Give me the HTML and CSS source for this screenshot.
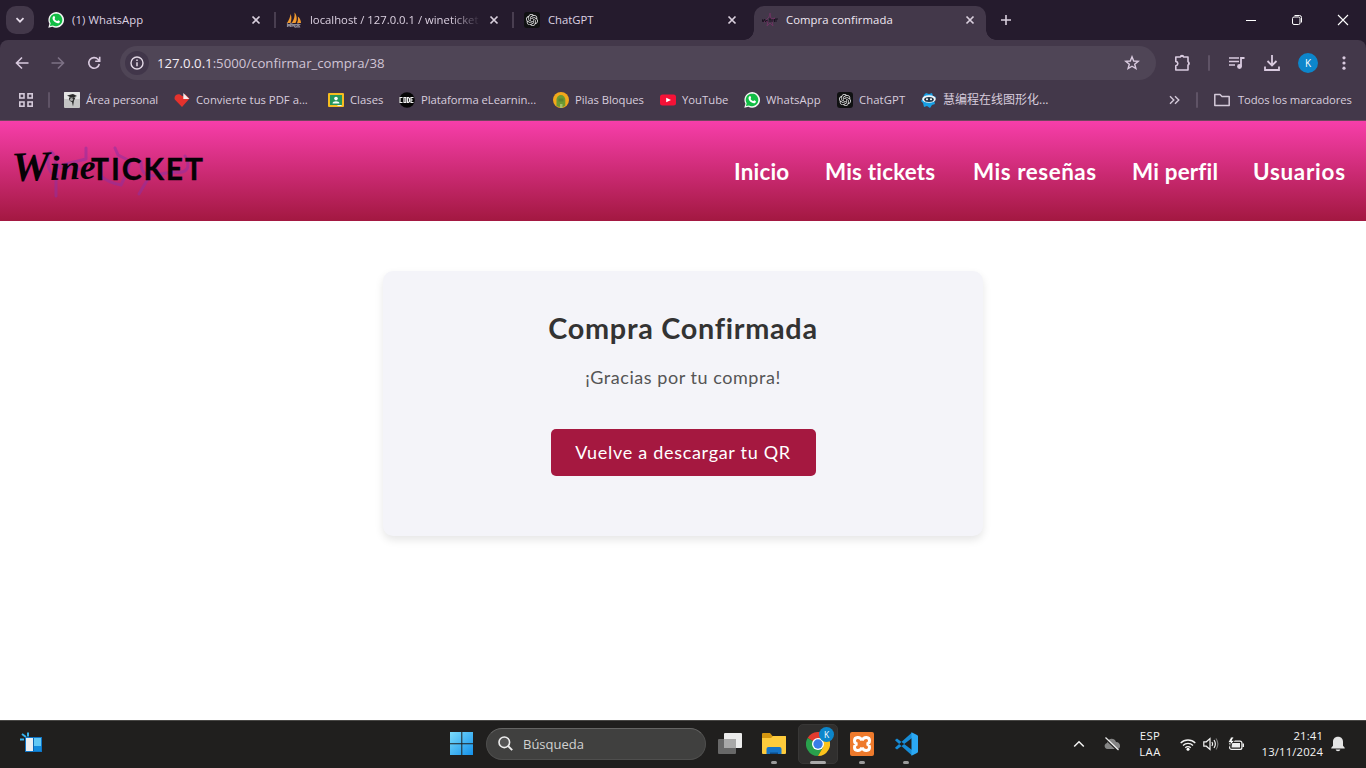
FILE: index.html
```html
<!DOCTYPE html>
<html lang="es">
<head>
<meta charset="utf-8">
<title>Compra confirmada</title>
<link rel="stylesheet" href="styles.css">
</head>
<body>
<svg class="defs" width="0" height="0" aria-hidden="true">
  <symbol id="whatsapp" viewBox="0 0 16 16">
    <path d="M.3 15.7l1.1-4A7.8 7.8 0 1 1 4.4 14.7z" fill="#f4f6f4"/>
    <path d="M1.900 14.100l.8-2.800a6.300 6.300 0 1 1 2.200 2.100z" fill="#12bd45"/>
    <path d="M5.500 4.200c.5-.3.9-.2 1.100.3l.5 1.200c.1.4-.6.9-.5 1.200.5 1 1.400 1.800 2.500 2.200.4.1.8-.9 1.200-.8l1.300.7c.5.2.3 1.200-.2 1.700-.9.8-2.200.6-3.700-.1C6 9.700 4.600 7.900 4.500 6.300c0-.9.4-1.700 1-2.100z" fill="#fff"/>
  </symbol>
  <symbol id="chatgpt" viewBox="0 0 16 16">
    <rect width="16" height="16" rx="3" fill="#101112"/>
    <path transform="translate(2 2) scale(.5)" fill="#e6e6e6" d="M22.2819 9.8211a5.9847 5.9847 0 0 0-.5157-4.9108 6.0462 6.0462 0 0 0-6.5098-2.9A6.0651 6.0651 0 0 0 4.9807 4.1818a5.9847 5.9847 0 0 0-3.9977 2.9 6.0462 6.0462 0 0 0 .7427 7.0966 5.98 5.98 0 0 0 .511 4.9107 6.051 6.051 0 0 0 6.5146 2.9001A5.9847 5.9847 0 0 0 13.2599 24a6.0557 6.0557 0 0 0 5.7718-4.2058 5.9894 5.9894 0 0 0 3.9977-2.9001 6.0557 6.0557 0 0 0-.7475-7.0729zm-9.022 12.6081a4.4755 4.4755 0 0 1-2.8764-1.0408l.1419-.0804 4.7783-2.7582a.7948.7948 0 0 0 .3927-.6813v-6.7369l2.02 1.1686a.071.071 0 0 1 .038.052v5.5826a4.504 4.504 0 0 1-4.4945 4.4944zm-9.6607-4.1254a4.4708 4.4708 0 0 1-.5346-3.0137l.142.0852 4.783 2.7582a.7712.7712 0 0 0 .7806 0l5.8428-3.3685v2.3324a.0804.0804 0 0 1-.0332.0615L9.74 19.9502a4.4992 4.4992 0 0 1-6.1408-1.6464zM2.3408 7.8956a4.485 4.485 0 0 1 2.3655-1.9728V11.6a.7664.7664 0 0 0 .3879.6765l5.8144 3.3543-2.0201 1.1685a.0757.0757 0 0 1-.071 0l-4.8303-2.7865A4.504 4.504 0 0 1 2.3408 7.872zm16.5963 3.8558L13.1038 8.364 15.1192 7.2a.0757.0757 0 0 1 .071 0l4.8303 2.7913a4.4944 4.4944 0 0 1-.6765 8.1042v-5.6772a.79.79 0 0 0-.407-.667zm2.0107-3.0231l-.142-.0852-4.7735-2.7818a.7759.7759 0 0 0-.7854 0L9.409 9.2297V6.8974a.0662.0662 0 0 1 .0284-.0615l4.8303-2.7866a4.4992 4.4992 0 0 1 6.6802 4.66zM8.3065 12.863l-2.02-1.1638a.0804.0804 0 0 1-.038-.0567V6.0742a4.4992 4.4992 0 0 1 7.3757-3.4537l-.142.0805L8.704 5.459a.7948.7948 0 0 0-.3927.6813zm1.0976-2.3654l2.602-1.4998 2.6069 1.4998v2.9994l-2.5974 1.4997-2.6067-1.4997Z"/>
  </symbol>
  <symbol id="close" viewBox="0 0 10 10">
    <path d="M1.500 1.500l7 7M8.500 1.500l-7 7" stroke="#d9cfdd" stroke-width="1.700" fill="none"/>
  </symbol>
</svg>

<div class="tabstrip">
  <button class="tab-search"><svg width="10" height="10" viewBox="0 0 10 10"><path d="M1.500 3.200L5 6.700l3.500-3.500" fill="none" stroke="#e6dcea" stroke-width="1.700"/></svg></button>
  <div class="tab">
    <svg class="ico"><use href="#whatsapp"/></svg><span class="tab-title tt-wa">(1) WhatsApp</span><svg class="close"><use href="#close"/></svg>
  </div>
  <div class="tab sep">
    <svg class="ico" viewBox="0 0 16 16"><path d="M1 11C3 8 4.300 5 4.500 2 6 5 5.500 8 4.500 11zM5.700 11C8 8 9 4 8.500.5 11 3 11.500 8 9.500 11zM11 11c1-2 1.200-4 .8-6.500C14 6 15 8.500 15 11z" fill="#f29a2e"/><path d="M1 12.500h13.500M1.500 15v-3l1.500 2 1.500-2v3M6 15v-3l3 3v-3M10.500 15l1.500-3 1.500 3z" fill="none" stroke="#8b8793" stroke-width="1.200"/></svg><span class="tab-title fade">localhost / 127.0.0.1 / wineticket</span><svg class="close"><use href="#close"/></svg>
  </div>
  <div class="tab sep">
    <svg class="ico"><use href="#chatgpt"/></svg><span class="tab-title">ChatGPT</span><svg class="close"><use href="#close"/></svg>
  </div>
  <div class="tab active">
    <svg class="ico" viewBox="0 0 16 16"><path d="M2 10l5-5 1-4 1 6 4-1-3 3 1 5-3-3-3 3 1-5z" fill="none" stroke="#6b3360"/><path d="M0 7l1 3 1.500-3 1 3 1-2 1.500 1.500M7 7h2M8 7v3M10 7v3M11 8.500L12.500 7v3M14 7v3M13 7h3" fill="none" stroke="#1b1120"/></svg><span class="tab-title tt-cc">Compra confirmada</span><svg class="close"><use href="#close"/></svg>
  </div>
  <svg class="new-tab" width="12" height="12" viewBox="0 0 12 12"><path d="M6 1v10M1 6h10" stroke="#d9cfdd" stroke-width="1.600"/></svg>
  <div class="win-controls">
    <svg width="12" height="12" viewBox="0 0 12 12"><path d="M1 6.500h10" stroke="#fff"/></svg>
    <svg width="12" height="12" viewBox="0 0 12 12"><g fill="none" stroke="#fff"><rect x="1.500" y="3" width="7.500" height="7.500" rx="1.500"/><path d="M3.500 1.500H8.500a2 2 0 0 1 2 2V8.500"/></g></svg>
    <svg width="12" height="12" viewBox="0 0 12 12"><path d="M1 1l10 10M11 1L1 11" stroke="#fff" stroke-width="1.100"/></svg>
  </div>
</div>

<div class="toolbar">
  <div class="nav-icons">
    <svg width="14" height="14" viewBox="0 0 14 14"><path d="M13.500 7H2M7 1.500L1.500 7 7 12.500" fill="none" stroke="#d9cadf" stroke-width="1.600"/></svg>
    <svg width="14" height="14" viewBox="0 0 14 14"><path d="M.5 7H12M7 1.500L12.500 7 7 12.500" fill="none" stroke="#7d7185" stroke-width="1.600"/></svg>
    <svg width="14" height="14" viewBox="0 0 14 14"><path d="M12.300 8A5.300 5.300 0 1 1 11 3.300L12.500 5M12.700.8V5.300H8.200" fill="none" stroke="#d9cadf" stroke-width="1.600"/></svg>
  </div>
  <div class="omnibox">
    <span class="site-info"><svg width="14" height="14" viewBox="0 0 14 14"><circle cx="7" cy="7" r="6" fill="none" stroke="#e3d9e6" stroke-width="1.400"/><path d="M7 6.200v4M7 3.600v1.500" stroke="#e3d9e6" stroke-width="1.500"/></svg></span>
    <span class="url"><b>127.0.0.1</b>:5000/confirmar_compra/38</span>
    <svg class="star" width="16" height="16" viewBox="0 0 16 16"><path d="M8 1.800l1.700 4.200 4.500.3-3.500 2.900 1.200 4.400L8 11.200l-3.900 2.400 1.200-4.400L1.800 6.300l4.500-.3z" fill="none" stroke="#d9cadf" stroke-width="1.400"/></svg>
  </div>
  <div class="actions">
    <svg width="18" height="18" viewBox="0 0 18 18"><path d="M2.800 3h4.700a1.500 1.500 0 0 1 3 0H15v4.800a1.700 1.700 0 0 1 0 3.200v5H2.800v-4.200c2.700-.5 2.700-3.900 0-4.400z" fill="none" stroke="#d9cadf" stroke-width="1.600" stroke-linejoin="round"/><path d="M7.500 3a1.500 1.500 0 0 1 3 0zM15 7.800a1.700 1.700 0 0 1 0 3.200z" fill="#d9cadf"/></svg>
    <i class="divider"></i>
    <svg class="media" width="18" height="16" viewBox="0 0 18 16"><path d="M1 3h10M1 6.500h10M1 10h6" stroke="#d9cadf" stroke-width="1.600"/><path d="M13 11.500V3h3.500" fill="none" stroke="#d9cadf" stroke-width="1.800"/><circle cx="11.500" cy="11.500" r="2.400" fill="#d9cadf"/></svg>
    <svg width="18" height="18" viewBox="0 0 18 18"><path d="M9 1v10M4.500 7L9 11.500 13.500 7M2 12.500V16h14v-3.500" fill="none" stroke="#d9cadf" stroke-width="1.800"/></svg>
    <span class="avatar">K</span>
    <svg class="kebab" width="4" height="14" viewBox="0 0 4 14"><g fill="#d9cadf"><circle cx="2" cy="1.800" r="1.600"/><circle cx="2" cy="7" r="1.600"/><circle cx="2" cy="12.200" r="1.600"/></g></svg>
  </div>
</div>

<div class="bookmarks">
  <svg class="apps" width="14" height="14" viewBox="0 0 14 14"><g fill="none" stroke="#d4c9d9" stroke-width="1.600"><rect x=".8" y=".8" width="4.200" height="4.200"/><rect x="9" y=".8" width="4.200" height="4.200"/><rect x=".8" y="9" width="4.200" height="4.200"/><rect x="9" y="9" width="4.200" height="4.200"/></g></svg>
  <i class="divider"></i>
  <div class="bm-list">
    <div class="bm"><svg class="ico" viewBox="0 0 16 16"><rect width="16" height="16" rx="1" fill="#c4c4c4"/><rect width="16" height="7" rx="1" fill="#e5e5e5"/><path d="M3 3.500L9 2l4 2-5 2zM5 5.500c-.3 3 1.500 4 3 4.500l1 4.500 1-6 1.500-3z" fill="#292929"/><circle cx="7.500" cy="7.500" r="1.600" fill="#aaa"/></svg><span class="b1">Área personal</span></div>
    <div class="bm"><svg class="ico" viewBox="0 0 16 16"><path d="M8 15L.8 7.500C-.8 3 5 .3 8 4l3 .5V2l4.500 4.500z" fill="#e5322d"/><path d="M9.300 1l6 6h-6z" fill="#f4eeee"/></svg><span>Convierte tus PDF a...</span></div>
    <div class="bm"><svg class="ico" viewBox="0 0 16 16"><rect y="1" width="16" height="14" rx="1" fill="#f5bd1f"/><rect x="2" y="3" width="12" height="10" fill="#25965b"/><circle cx="8" cy="6.600" r="1.800" fill="#fff"/><path d="M4.500 11.500c0-3 7-3 7 0z" fill="#f4fff8"/><path d="M9.500 13h4v1h-4z" fill="#eee"/></svg><span>Clases</span></div>
    <div class="bm"><svg class="ico" viewBox="0 0 16 16"><circle cx="8" cy="8" r="7.800" fill="#050505"/><path d="M3.500 5.500H1v5h2.500M5 5.500h1.800v5H5zM8.500 5.500h1l1 1v3l-1 1h-1zM14.500 5.500H12v5h2.500M12 8h1.800" fill="none" stroke="#eee" stroke-width="1.200"/></svg><span class="b4">Plataforma eLearnin...</span></div>
    <div class="bm"><svg class="ico" viewBox="0 0 16 16"><circle cx="8" cy="8" r="8" fill="#f2a81b"/><path d="M3.500 14V7.500a4.300 4.300 0 0 1 8.800 0V13.500c-2 2-6 2-8.800.5z" fill="#6b9a32"/><path d="M5.500 6.500h5v3h-5z" fill="#5a8430"/><path d="M7 12h2.500v4H7z" fill="#a5bd69"/></svg><span class="b4">Pilas Bloques</span></div>
    <div class="bm"><svg class="ico" viewBox="0 0 16 16"><rect y="2.500" width="16" height="11" rx="2.500" fill="#f51237"/><path d="M6.200 5.700L11 8l-4.800 2.300z" fill="#fff"/></svg><span>YouTube</span></div>
    <div class="bm"><svg class="ico"><use href="#whatsapp"/></svg><span class="b7">WhatsApp</span></div>
    <div class="bm"><svg class="ico"><use href="#chatgpt"/></svg><span class="b7">ChatGPT</span></div>
    <div class="bm"><svg class="ico" viewBox="0 0 16 16"><path d="M5 1l3 1 3-1 1 3 3 1-2 3 1 4-3 1-2 3-3-2-3 1-1-4-2-2 2-3 1-3z" fill="#189fe4"/><ellipse cx="8" cy="7" rx="6.800" ry="3.800" fill="#f1f5f8"/><ellipse cx="8" cy="7.400" rx="4.800" ry="2.500" fill="#223445"/><circle cx="6" cy="7.200" r="1" fill="#fff"/><circle cx="10" cy="7.200" r="1" fill="#fff"/></svg><span class="b9">慧编程在线图形化...</span></div>
  </div>
  <div class="bm-right">
    <svg width="11" height="10" viewBox="0 0 11 10"><path d="M1 1.200L4.800 5 1 8.800M6 1.200L9.800 5 6 8.800" fill="none" stroke="#d4c9d9" stroke-width="1.400"/></svg>
    <i class="divider"></i>
    <svg width="16" height="14" viewBox="0 0 16 14"><path d="M.8 11.500v-10H6l2 2h7.200v9H.8z" fill="none" stroke="#d4c9d9" stroke-width="1.500" stroke-linejoin="round"/></svg>
    <span class="b10">Todos los marcadores</span>
  </div>
</div>

<header class="site-header">
  <svg class="logo" width="210" height="70" viewBox="0 0 210 70">
    <g fill="none" stroke="#8f2fa0" stroke-width="3" opacity=".55" stroke-linecap="round" stroke-linejoin="round">
      <path d="M56 60V32c-1-20-8-20-8-8 0 9 3 16 10 16M58 30l28-7V12M60 32c12-4 18 6 26-2M115 12l3 7 12 6-4 14-5 10c-10-2-16-5-20-9M139 58l10-17c-8-6-8-9-8-15M150 40l22-4c14 2 20-3 13-16"/>
    </g>
    <text class="logo-wine" x="12" y="44" textLength="84" lengthAdjust="spacingAndGlyphs" transform="rotate(-2 50 44)"><tspan class="logo-cap">W</tspan>ine</text>
    <text class="logo-ticket" x="91" y="44" textLength="112" lengthAdjust="spacing">TICKET</text>
  </svg>
  <nav class="menu">
    <a class="m1">Inicio</a><a class="m2">Mis tickets</a><a class="m3">Mis reseñas</a><a class="m4">Mi perfil</a><a class="m5">Usuarios</a>
  </nav>
</header>

<main class="page">
  <section class="card">
    <h1>Compra Confirmada</h1>
    <p>¡Gracias por tu compra!</p>
    <a class="btn">Vuelve a descargar tu QR</a>
  </section>
</main>

<footer class="taskbar">
  <svg class="widgets" width="24" height="22" viewBox="0 0 24 22"><path d="M2 2l4 3M8 .5v4M0 7.500h4" stroke="#37b3ee" stroke-width="2"/><rect x="5.500" y="5.500" width="16" height="14" fill="#0d65b0" stroke="#0f75c6"/><rect x="6" y="6" width="7" height="13" fill="#eceff2"/><rect x="14" y="6" width="7" height="8" fill="#61c8f5"/><rect x="14" y="14" width="7" height="5" fill="#128bdd"/></svg>
  <div class="task-center">
    <svg class="start" width="24" height="24" viewBox="0 0 24 24"><defs><linearGradient id="win" gradientUnits="userSpaceOnUse" x1="0" y1="0" x2="24" y2="24"><stop offset="0" stop-color="#7bdcfb"/><stop offset="1" stop-color="#0f8de9"/></linearGradient></defs><path d="M0 0h11.300v11.300H0zM12.300 0H23v11.300H12.300zM0 12.300h11.300V23H0zM12.300 12.300H23V23H12.300z" fill="url(#win)"/></svg>
    <div class="search"><svg width="16" height="16" viewBox="0 0 16 16"><circle cx="6.300" cy="6.300" r="5.300" fill="#555" stroke="#eee" stroke-width="1.600"/><path d="M10.200 10.200l4 4" stroke="#eee" stroke-width="1.900"/></svg><span>Búsqueda</span></div>
    <div class="task"><svg width="24" height="24" viewBox="0 0 24 24"><rect x="6" y="1" width="18" height="15" rx="1" fill="#ececec"/><rect x="0" y="7" width="18" height="15" rx="1" fill="#707070" opacity=".9"/><path d="M6 7h12v9H6z" fill="#a8a8a8"/></svg></div>
    <div class="task run"><svg width="24" height="24" viewBox="0 0 24 24"><path d="M0 2q0-1 1-1h7l2.500 3H24v6H0z" fill="#d49610"/><path d="M0 6h9l2-2h12q1 0 1 1v16q0 1-1 1H1q-1 0-1-1z" fill="#fdcb3c"/><path d="M4.500 22v-5q0-2 2-2h11q2 0 2 2v5z" fill="#1674c7"/><path d="M8 22v-1.500h8V22z" fill="#0d4c88"/></svg></div>
    <div class="task run current"><svg width="24" height="24" viewBox="0 0 24 24"><path d="M12 12L1.600 6A12 12 0 0 1 22.400 6z" fill="#e33b2e"/><path d="M12 12L1.600 6A12 12 0 0 0 12 24l5.200-9z" fill="#29a04c"/><path d="M22.400 6A12 12 0 0 1 12 24l5.200-9L12 6z" fill="#fbc31c"/><circle cx="12" cy="12" r="6" fill="#fff"/><circle cx="12" cy="12" r="4.700" fill="#397de7"/></svg><span class="badge">K</span></div>
    <div class="task run"><svg width="24" height="24" viewBox="0 0 24 24"><rect width="24" height="24" rx="2" fill="#ee7a2c"/><g fill="none" stroke="#fff" stroke-width="3"><path d="M12 8.500C10 4 4.500 5 4.500 8.500c0 2 1 3.300 3 3.500-2 .2-3 1.500-3 3.500 0 3.500 5.500 4.500 7.500 0M12 8.500C14 4 19.500 5 19.500 8.500c0 2-1 3.300-3 3.500 2 .2 3 1.500 3 3.500 0 3.500-5.500 4.500-7.500 0"/><path d="M8 12h8" stroke="#ee7a2c" stroke-width="1"/></g></svg></div>
    <div class="task run"><svg width="24" height="24" viewBox="0 0 24 24"><path d="M1 8l2-1.500L18 18v5.500L1.500 8.800zM1 16l2 1.500L18 6V.5L1.500 15.200z" fill="#168bd5"/><path d="M17.500.3L23 3c1 .5 1 1 1 2v14c0 1 0 1.500-1 2l-5.500 2.700z" fill="#2ba8f3"/></svg></div>
  </div>
  <div class="tray">
    <svg class="chev" width="12" height="8" viewBox="0 0 12 8"><path d="M1.200 6.500L6 1.800l4.800 4.700" fill="none" stroke="#f2f2f2" stroke-width="1.500"/></svg>
    <svg class="cloud" width="18" height="14" viewBox="0 0 18 14"><path d="M4.500 12C1 12 .5 7 4 6c.5-5 7.500-6 9-1 5 0 5.500 7 1 7z" fill="#858585"/><path d="M1.700 1.300l13 12.500" stroke="#201f1e" stroke-width="1.500"/><path d="M2.500.5l13 12.500" stroke="#eee" stroke-width="1.200"/></svg>
    <div class="lang"><span>ESP</span><span>LAA</span></div>
    <svg class="wifi" width="16" height="13" viewBox="0 0 16 13"><g fill="none" stroke="#f3f3f3" stroke-width="1.300"><path d="M.7 5a10.400 10.400 0 0 1 14.600 0M3 7.500a7.100 7.100 0 0 1 10 0M5.300 9.800a3.800 3.800 0 0 1 5.400 0"/></g><circle cx="8" cy="11.300" r="1.500" fill="#fff"/></svg>
    <svg class="vol" width="16" height="14" viewBox="0 0 16 14"><g fill="none" stroke="#f3f3f3" stroke-width="1.200"><path d="M.8 4.800h2.500L7 1.500v11L3.300 9.200H.8z"/><path d="M9 5q1.300 2 0 4M11 3q2.700 4 0 8"/><path d="M13 1.500q3.700 5.500 0 11" stroke="#777"/></g></svg>
    <svg class="batt" width="16" height="15" viewBox="0 0 16 15"><rect x="1.600" y="4.100" width="12.300" height="8.300" rx="2" fill="none" stroke="#f3f3f3" stroke-width="1.200"/><path d="M4 6h8v4.500H3.500zM14.500 6.500H16v3.500h-1.500z" fill="#eee"/><path d="M3 0L0 5.500h2.500L1 9.500l5.500-6H4L6 0z" fill="#fff" stroke="#201f1e" stroke-width=".8"/></svg>
    <div class="clock"><span>21:41</span><span>13/11/2024</span></div>
    <svg class="bell" width="14" height="16" viewBox="0 0 14 16"><path d="M7 .7c3.300 0 5 2.200 5 5v4l1.700 2v.8H.3v-.8L2 9.700v-4c0-2.800 1.700-5 5-5zM4.700 13.500h4.600c-.3 2.200-4.300 2.200-4.600 0z" fill="#e4e4e4"/></svg>
  </div>
</footer>
</body>
</html>
```
FILE: styles.css
```css
* { box-sizing: border-box; }
body {
  margin: 0;
  width: 1366px;
  height: 768px;
  overflow: hidden;
  display: flex;
  flex-direction: column;
  background: #fff;
  font-family: "Open Sans", "Noto Sans CJK SC", sans-serif;
  font-size: 11.3px;
}
svg { display: block; flex: none; }
.defs { position: absolute; }
.ico { width: 16px; height: 16px; }
.divider { width: 2px; height: 16px; border-radius: 1px; background: #5f5366; flex: none; }

/* Tab strip */
.tabstrip { height: 40px; flex: none; display: flex; align-items: center; background: #251b2d; color: #ddd2e2; }
.tab-search { width: 28px; height: 28px; margin: 0 4px 0 6px; padding: 0; border: 0; border-radius: 10px; background: #43384a; display: grid; place-items: center; }
.tab { width: 238px; height: 40px; padding: 0 15px 0 10px; display: flex; align-items: center; gap: 8px; position: relative; }
.tab-title { flex: 1; padding-bottom: 2px; white-space: nowrap; overflow: hidden; }
.tt-wa { letter-spacing: .1px; }
.tt-cc { letter-spacing: .08px; }
.tab .close { width: 10px; height: 10px; }
.sep::before { content: ""; position: absolute; left: -2px; top: 12px; width: 2px; height: 16px; background: #493e50; }
.fade { -webkit-mask-image: linear-gradient(90deg, #000 82%, transparent 100%); mask-image: linear-gradient(90deg, #000 82%, transparent 100%); }
.active { color: #f0e8f3; }
.active > * { position: relative; }
.active::before { content: ""; position: absolute; left: 2px; right: 4px; top: 6px; bottom: 0; border-radius: 10px 10px 0 0; background: #43384a; }
.active::after { content: ""; position: absolute; left: -8px; right: -6px; bottom: 0; height: 10px;
  background: radial-gradient(circle at 0 0, transparent 9.5px, #43384a 10px) 0 0 / 10px 10px no-repeat, radial-gradient(circle at 100% 0, transparent 9.5px, #43384a 10px) 100% 0 / 10px 10px no-repeat; }
.new-tab { margin-left: 10px; }
.win-controls { margin-left: auto; padding-right: 17px; display: flex; gap: 34px; }

/* Toolbar */
.toolbar { height: 46px; flex: none; display: flex; align-items: center; background: #43384a; border-radius: 8px 8px 0 0; box-shadow: 0 -8px 0 0 #251b2d; clip-path: inset(0); }
.nav-icons { width: 120px; padding-left: 15px; display: flex; gap: 22px; }
.omnibox { width: 1036px; height: 34px; border-radius: 17px; background: #4f4556; display: flex; align-items: center; padding: 0 16px 0 5px; }
.site-info { width: 24px; height: 24px; border-radius: 50%; background: #41364a; display: grid; place-items: center; margin-right: 8px; }
.url { flex: 1; font-size: 13.2px; color: #d0c4d5; white-space: nowrap; }
.url b { font-weight: 400; color: #f3edf5; }
.actions { padding-left: 17px; display: flex; align-items: center; }
.actions .divider { margin: 0 18px 0 17px; }
.actions .media { margin-right: 17px; }
.avatar { width: 20px; height: 20px; margin: 0 24px 0 17px; border-radius: 50%; background: #0c86cb; color: #fff; font-size: 10px; display: grid; place-items: center; }

/* Bookmarks bar */
.bookmarks { height: 35px; flex: none; padding: 0 14px 7px 19px; display: flex; align-items: center; background: #43384a; border-bottom: 1px solid #71455f; color: #d8cddd; }
.bookmarks .apps { margin-right: 15px; }
.bm-list { margin-left: 14px; display: grid; grid-template-columns: 110px 154px 71px 154px 107px 84px 93px 84px 130px; }
.bm { display: flex; align-items: center; gap: 6px; white-space: nowrap; }
.b1 { letter-spacing: -.1px; }
.b4 { letter-spacing: -.05px; }
.b7 { letter-spacing: .1px; }
.b9 { font-size: 12px; line-height: 16px; }
.bm-right { margin-left: auto; display: flex; align-items: center; white-space: nowrap; }
.bm-right .divider { margin: 0 16px; }
.b10 { margin-left: 8px; width: 114px; letter-spacing: -.12px; }

/* Site header */
.site-header { height: 100px; flex: none; display: flex; align-items: center; justify-content: space-between; padding-right: 20px; background: linear-gradient(#f73eaa, #a31841); }
.logo-wine { font: italic 700 35px "Liberation Serif", serif; fill: #050205; }
.logo-cap { font-size: 42px; }
.logo-ticket { font: 700 30px Lato, sans-serif; fill: #050205; stroke: #050205; stroke-width: .3px; }
.menu { display: grid; grid-template-columns: 91px 148px 159px 121px 93px; color: #fff; font: 700 22.4px Lato, sans-serif; white-space: nowrap; }
.m1 { letter-spacing: .2px; }
.m2 { letter-spacing: .2px; }
.m3 { letter-spacing: .55px; }
.m4 { letter-spacing: .2px; }
.m5 { letter-spacing: .75px; }

/* Confirmation card */
.page { flex: 1; padding-top: 50px; font-family: Lato, sans-serif; }
.card { width: 600px; height: 265px; margin: 0 auto; padding: 39px 20px; border-radius: 10px; background: #f4f4f9; box-shadow: 0 4px 8px rgba(0, 0, 0, .1); display: flex; flex-direction: column; align-items: center; }
.card h1 { margin: 0; font-size: 28.8px; line-height: 36px; letter-spacing: .72px; color: #333; }
.card p { margin: 19px 0 0; font-size: 18px; line-height: 24px; letter-spacing: .55px; color: #555; }
.btn { width: 265px; height: 47px; margin-top: 40px; border-radius: 5px; background: #a51840; color: #fff; font-size: 18px; line-height: 47px; letter-spacing: .7px; text-align: center; }

/* Taskbar */
.taskbar { height: 48px; flex: none; display: flex; align-items: center; background: #201f1e; border-top: 1px solid #484745; color: #f4f4f4; }
.widgets { margin: 0 0 4px 20px; }
.task-center { margin: 0 0 2px 406px; display: flex; align-items: center; }
.search { width: 220px; height: 32px; margin: 0 4px 0 12px; padding-left: 11px; border-radius: 16px; background: #40403f; border: 1px solid #4e4e4d; border-top-color: #656564; display: flex; align-items: center; gap: 9px; font-size: 13px; color: #d2d2d1; }
.task { width: 40px; height: 40px; margin-right: 4px; border-radius: 5px; display: grid; place-items: center; position: relative; }
.current { background: #302f2e; border: 1px solid #383736; }
.run::after { content: ""; position: absolute; bottom: 0; left: 17px; width: 6px; height: 3px; border-radius: 2px; background: #9b9b9b; }
.current::after { left: 11px; width: 16px; bottom: -1px; background: #aaa; }
.badge { position: absolute; left: 20px; top: 2px; width: 15px; height: 15px; border-radius: 50%; background: #0c86cb; color: #fff; font-size: 8.5px; display: grid; place-items: center; }
.tray { margin-left: auto; padding: 0 21px 1px 0; display: flex; align-items: center; line-height: 16px; }
.lang, .clock { display: flex; flex-direction: column; }
.cloud { margin: 0 17px 0 18px; }
.lang { width: 24px; align-items: center; margin-right: 18px; letter-spacing: .4px; }
.vol { margin: 0 9px 0 7px; }
.clock { width: 62px; align-items: flex-end; margin: 0 8px 0 17px; white-space: nowrap; letter-spacing: .15px; }
```
